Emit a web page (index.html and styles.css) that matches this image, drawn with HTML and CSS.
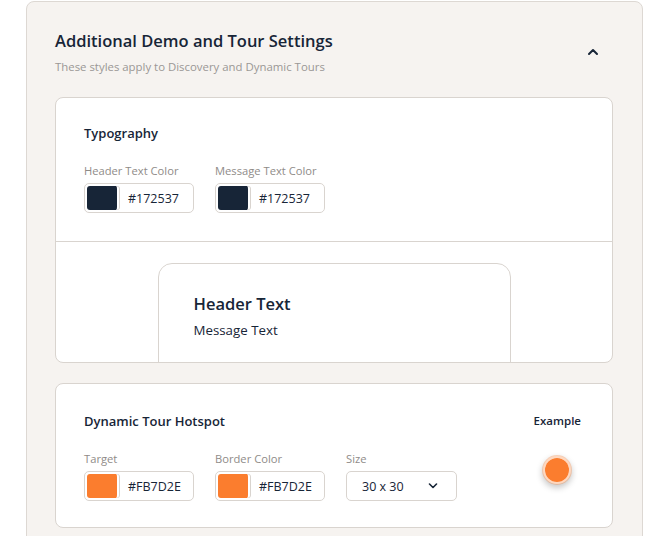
FILE: index.html
```html
<!DOCTYPE html>
<html lang="en">
<head>
    <meta charset="UTF-8">
    <meta name="viewport" content="width=device-width, initial-scale=1.0">
    <title>Tour Settings</title>
    <link rel="stylesheet" href="styles.css">
</head>
<body>

    <div class="panel">
        <!-- Cabecera del panel -->
        <div class="panel-head">
            <div>
                <h2 class="panel-title">Additional Demo and Tour Settings</h2>
                <p class="panel-sub">These styles apply to Discovery and Dynamic Tours</p>
            </div>
            <button class="collapse-btn" aria-label="Collapse">
                <svg width="12" height="8" viewBox="0 0 12 8"><path d="M2 6 L6 2 L10 6" fill="none" stroke="#172537" stroke-width="2" stroke-linecap="round" stroke-linejoin="round"/></svg>
            </button>
        </div>

        <!-- Tipografía -->
        <div class="card">
            <div class="card-body">
                <h3 class="card-title">Typography</h3>
                <div class="fields">
                    <div class="field">
                        <label>Header Text Color</label>
                        <div class="color-input">
                            <span class="swatch dark"></span>
                            <span class="hex">#172537</span>
                        </div>
                    </div>
                    <div class="field">
                        <label>Message Text Color</label>
                        <div class="color-input">
                            <span class="swatch dark"></span>
                            <span class="hex">#172537</span>
                        </div>
                    </div>
                </div>
            </div>
            <div class="preview">
                <div class="preview-box">
                    <div class="preview-header">Header Text</div>
                    <div class="preview-msg">Message Text</div>
                </div>
            </div>
        </div>

        <!-- Hotspot -->
        <div class="card">
            <div class="card-body hotspot">
                <div>
                    <h3 class="card-title">Dynamic Tour Hotspot</h3>
                    <div class="fields">
                        <div class="field">
                            <label>Target</label>
                            <div class="color-input">
                                <span class="swatch orange"></span>
                                <span class="hex">#FB7D2E</span>
                            </div>
                        </div>
                        <div class="field">
                            <label>Border Color</label>
                            <div class="color-input">
                                <span class="swatch orange"></span>
                                <span class="hex">#FB7D2E</span>
                            </div>
                        </div>
                        <div class="field">
                            <label>Size</label>
                            <div class="select">
                                <span>30 x 30</span>
                                <svg width="10" height="6" viewBox="0 0 10 6"><path d="M1.5 1 L5 4.5 L8.5 1" fill="none" stroke="#172537" stroke-width="1.6" stroke-linecap="round" stroke-linejoin="round"/></svg>
                            </div>
                        </div>
                    </div>
                </div>
                <div class="example">
                    <div class="example-label">Example</div>
                    <div class="dot"></div>
                </div>
            </div>
        </div>
    </div>

</body>
</html>
```

FILE: styles.css
```css
body {
    margin: 0;
    padding: 1px 0 0 26px;
    background: #fff;
    font-family: "Open Sans", Arial, sans-serif;
    color: #172537;
}
.panel {
    width: 558px;
    background: #f6f3f0;
    border: 1px solid #ddd8d3;
    border-radius: 8px;
    padding: 0 29px 20px 28px;
}
.panel-head {
    display: flex;
    justify-content: space-between;
    align-items: center;
    padding: 28px 0 22px;
}
.panel-title {
    margin: 0;
    font-size: 16.5px;
    font-weight: 600;
    line-height: 22px;
}
.panel-sub {
    margin: 7px 0 0;
    font-size: 11.4px;
    line-height: 16px;
    color: #9a9795;
}
.collapse-btn {
    background: none;
    border: none;
    padding: 0;
    margin: 0 14px 2px 0;
    display: flex;
    cursor: pointer;
}
.card {
    background: #fff;
    border: 1px solid #d9d4cf;
    border-radius: 8px;
    overflow: hidden;
    margin-bottom: 20px;
}
.card-body {
    padding: 26px 28px 28px;
}
.card-title {
    margin: 0 0 22px;
    font-size: 13px;
    font-weight: 600;
    line-height: 18px;
}
.fields {
    display: flex;
    gap: 21px;
}
.field {
    display: flex;
    flex-direction: column;
    gap: 5px;
}
.field label {
    font-size: 11.2px;
    color: #8f8b88;
    line-height: 14px;
}
.color-input {
    display: flex;
    align-items: center;
    width: 108px;
    height: 28px;
    border: 1px solid #d9d4cf;
    border-radius: 5px;
    background: #fff;
}
.swatch {
    width: 30px;
    height: 24px;
    margin-left: 2px;
    border-radius: 3px;
    border-right: 2px solid #fff;
    box-shadow: 1px 0 0 #d9d4cf;
}
.swatch.dark { background: #172537; }
.swatch.orange { background: #fb7d2e; }
.hex {
    margin-left: 9px;
    font-size: 12.5px;
}
.select {
    display: flex;
    align-items: center;
    justify-content: space-between;
    border: 1px solid #d9d4cf;
    border-radius: 5px;
    padding: 0 18px 0 15px;
    box-sizing: border-box;
    width: 111px;
    height: 30px;
    font-size: 12.5px;
}
.preview {
    border-top: 1px solid #d9d4cf;
    height: 121px;
    padding-top: 21px;
    box-sizing: border-box;
    display: flex;
    justify-content: center;
}
.preview-box {
    width: 316px;
    height: 120px;
    border: 1px solid #d9d4cf;
    border-radius: 14px;
    padding: 29px 0 0 35px;
}
.preview-header {
    font-size: 16.5px;
    font-weight: 600;
    line-height: 22px;
}
.preview-msg {
    margin-top: 6px;
    font-size: 13.3px;
}
.hotspot {
    display: flex;
    justify-content: space-between;
    padding-top: 28px;
    padding-bottom: 26px;
}
.example {
    display: flex;
    flex-direction: column;
    align-items: center;
    gap: 25px;
    margin-right: 3px;
}
.example-label {
    font-size: 11.5px;
    font-weight: 600;
    line-height: 18px;
}
.dot {
    width: 24px;
    height: 24px;
    border-radius: 50%;
    background: #fb7d2e;
    border: 3px solid rgba(251, 125, 46, 0.3);
    background-clip: padding-box;
    box-shadow: 0 3px 6px rgba(0, 0, 0, 0.22);
}
```
